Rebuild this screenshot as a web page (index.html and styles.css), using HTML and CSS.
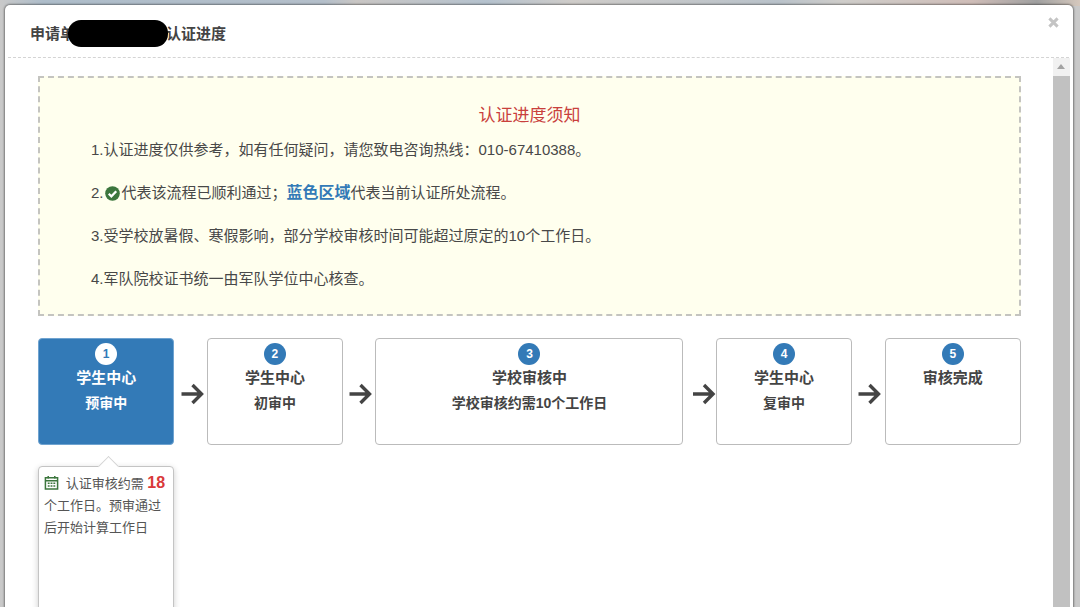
FILE: index.html
```html
<!DOCTYPE html>
<html lang="zh-CN">
<head>
<meta charset="utf-8">
<title>认证进度</title>
<link rel="stylesheet" href="styles.css">
</head>
<body>
<div class="backdrop-strip"></div>
<section class="modal">
  <header class="modal-head">
    <h4 class="modal-title">申请单<span class="redact"></span>认证进度</h4>
    <svg class="close" viewBox="0 0 11 11" width="11" height="11"><path d="M1.4 1.4l8.2 8.2M9.6 1.4L1.4 9.6" fill="none" stroke="#c4c4c4" stroke-width="3"/></svg>
  </header>
  <div class="modal-main">
    <div class="content">
      <div class="notice">
        <h5 class="notice-title">认证进度须知</h5>
        <p>1.认证进度仅供参考，如有任何疑问，请您致电咨询热线：010-67410388。</p>
        <p>2.<svg class="ok" viewBox="0 0 16 16" width="15" height="15"><circle cx="8" cy="8" r="7.8" fill="#3c763d"/><path d="M4 8.2l2.8 2.8L12 5.6" fill="none" stroke="#fff" stroke-width="2.4"/></svg>代表该流程已顺利通过；<b class="blue">蓝色区域</b>代表当前认证所处流程。</p>
        <p>3.受学校放暑假、寒假影响，部分学校审核时间可能超过原定的10个工作日。</p>
        <p>4.军队院校证书统一由军队学位中心核查。</p>
      </div>
      <div class="steps">
        <div class="step active"><span class="num">1</span><strong>学生中心</strong><strong class="sub">预审中</strong></div>
        <svg class="arrow" viewBox="0 0 24 24" width="24" height="24"><path d="M1 12h20M12 3l9 9-9 9" fill="none" stroke="#444" stroke-width="3.4"/></svg>
        <div class="step"><span class="num">2</span><strong>学生中心</strong><strong class="sub">初审中</strong></div>
        <svg class="arrow" viewBox="0 0 24 24" width="24" height="24"><path d="M1 12h20M12 3l9 9-9 9" fill="none" stroke="#444" stroke-width="3.4"/></svg>
        <div class="step wide"><span class="num">3</span><strong>学校审核中</strong><strong class="sub">学校审核约需10个工作日</strong></div>
        <svg class="arrow far" viewBox="0 0 24 24" width="24" height="24"><path d="M1 12h20M12 3l9 9-9 9" fill="none" stroke="#444" stroke-width="3.4"/></svg>
        <div class="step"><span class="num">4</span><strong>学生中心</strong><strong class="sub">复审中</strong></div>
        <svg class="arrow" viewBox="0 0 24 24" width="24" height="24"><path d="M1 12h20M12 3l9 9-9 9" fill="none" stroke="#444" stroke-width="3.4"/></svg>
        <div class="step"><span class="num">5</span><strong>审核完成</strong></div>
      </div>
      <div class="popover">
        <svg class="cal" viewBox="0 0 16 16" width="15" height="15"><path d="M1.5 3h13v12h-13zM1.5 6h13M4.5 1v3M11.5 1v3" fill="none" stroke="#3c763d" stroke-width="1.6"/><path d="M4 8h2v1.5H4zM7 8h2v1.5H7zM10 8h2v1.5h-2zM4 11h2v1.5H4zM7 11h2v1.5H7zM10 11h2v1.5h-2z" fill="#3c763d"/></svg>
        <span class="pop-lead">认证审核约需</span> <b class="days">18</b>个工作日。预审通过后开始计算工作日
      </div>
    </div>
    <div class="scrollbar"><span class="scroll-up"></span><span class="scroll-thumb"></span></div>
  </div>
</section>
</body>
</html>
```
FILE: styles.css
```css
* { box-sizing: border-box; }
html, body { margin: 0; height: 607px; overflow: hidden; }
body {
  position: relative;
  background: #c9c9c9;
  font-family: "Liberation Sans", "Noto Sans CJK SC", sans-serif;
  color: #333;
  font-size: 14px;
}
.backdrop-strip {
  position: absolute;
  inset: 0 0 auto 0;
  height: 6px;
  background: linear-gradient(90deg, #c9c9c9 0, #aebdca 4%, #b4bfca 30%, #c9c6c4 33%, #b5c2ce 45%, #cfccc9 53%, #b9c2ca 72%, #cfcdca 78%, #cfbdb8 90%, #a0a0a0 96%, #d5c8bd 100%);
}
.modal {
  position: absolute;
  left: 5px;
  top: 5px;
  width: 1068px;
  height: 602px;
  background: #fff;
  border-radius: 5px 5px 0 0;
  box-shadow: 0 0 2px 1px rgba(0, 0, 0, .4);
  display: flex;
  flex-direction: column;
  overflow: hidden;
}
.modal-head {
  height: 53px;
  flex: none;
  margin: 0 4px 0 3px;
  border-bottom: 1px dashed #d4d4d4;
  padding: 19px 0 0 22px;
  position: relative;
}
.modal-title {
  margin: 0;
  font-size: 15px;
  line-height: 20px;
  font-weight: 700;
  color: #444;
  display: flex;
}
.redact {
  width: 100px;
  height: 27px;
  margin: -4px -2px 0 -7px;
  background: #000;
  border-radius: 13px;
  position: relative;
}
.close {
  position: absolute;
  right: 10px;
  top: 12px;
}
.modal-main { flex: 1; display: flex; min-height: 0; }
.content { width: 1048px; flex: none; padding: 18px 32px 0 33px; }
.notice {
  height: 240px;
  border: 2px dashed #c4c4c0;
  background: #ffffee;
  padding: 28px 51px 0;
}
.notice-title {
  margin: 0 0 14px;
  text-align: center;
  color: #c9403c;
  font-size: 17px;
  line-height: 20px;
  font-weight: 400;
}
.notice p {
  margin: 0 0 23px;
  font-size: 15px;
  line-height: 20px;
  height: 20px;
  display: flex;
  align-items: center;
  color: #484848;
}
.ok { margin: 0 2px 0 1px; }
.blue { color: #337ab7; font-size: 16px; }
.steps {
  margin-top: 22px;
  display: flex;
  justify-content: space-between;
  align-items: center;
}
.step {
  width: 136.4px;
  height: 107px;
  border: 1px solid #bbb;
  border-radius: 4px;
  display: flex;
  flex-direction: column;
  align-items: center;
  padding-top: 4px;
  color: #444;
}
.step.wide { width: 308px; }
.step strong { font-size: 15px; line-height: 20px; margin-top: 3px; }
.step strong.sub { font-size: 14px; margin-top: 5px; }
.num {
  width: 22px;
  height: 22px;
  border-radius: 50%;
  background: #337ab7;
  color: #fff;
  font-size: 12px;
  font-weight: 700;
  display: flex;
  align-items: center;
  justify-content: center;
}
.step.active { background: #337ab7; border-color: #6fa3d0; color: #fff; }
.step.active .num { background: #fff; color: #337ab7; }
.arrow { flex: none; transform: translate(1.5px, 2px); }
.arrow.far { transform: translate(4px, 2px); }
.popover {
  position: relative;
  width: 136.4px;
  height: 200px;
  margin-top: 21px;
  border: 1px solid #c4c4c4;
  border-radius: 4px;
  background: #fff;
  box-shadow: 0 2px 6px rgba(0, 0, 0, .2);
  padding: 5px 5px;
  font-size: 13px;
  line-height: 22px;
  color: #555;
}
.popover::before {
  content: "";
  position: absolute;
  left: 62px;
  top: -8px;
  width: 14px;
  height: 14px;
  background: #fff;
  border: 1px solid #d4d4d4;
  border-width: 1px 0 0 1px;
  transform: rotate(45deg);
}
.cal { vertical-align: -2px; margin-right: 3px; position: relative; }
.pop-lead { font-size: 13px; }
.days { color: #d9393a; font-size: 16px; }
.scrollbar {
  width: 17px;
  flex: none;
  display: flex;
  flex-direction: column;
  background: #f1f1f1;
}
.scroll-up {
  height: 18px;
  flex: none;
  position: relative;
}
.scroll-up::after {
  content: "";
  position: absolute;
  left: 4px;
  top: 6px;
  border: 4px solid transparent;
  border-top: 0;
  border-bottom: 5px solid #a3a3a3;
}
.scroll-thumb { flex: 1; background: #c1c1c1; }
```
